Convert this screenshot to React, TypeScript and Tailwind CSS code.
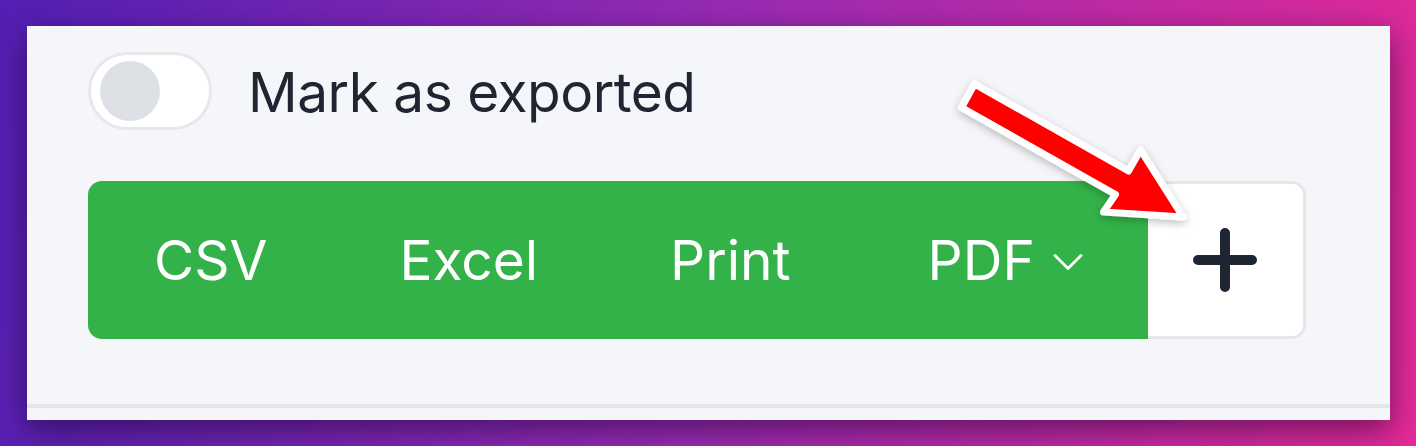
import { ChevronDown } from 'lucide-react'

const exportOptions = ['CSV', 'Excel', 'Print']

function Toggle() {
  return (
    <div className="w-[124px] h-[78px] rounded-full bg-white border-[3px] border-[#e6e8ec] flex items-center pl-[9px]">
      <div className="w-[60px] h-[60px] rounded-full bg-[#dde1e6]" />
    </div>
  )
}

function PlusIcon() {
  return (
    <svg width="64" height="64" viewBox="0 0 64 64" fill="none">
      <path d="M32 5v54M5 32h54" stroke="#1f2633" strokeWidth="10" strokeLinecap="round" />
    </svg>
  )
}

function Arrow() {
  return (
    <svg className="absolute left-0 top-0 pointer-events-none" width="1416" height="446" viewBox="0 0 1416 446">
      <defs>
        <filter id="arrowShadow" x="-20%" y="-20%" width="140%" height="140%">
          <feDropShadow dx="0" dy="3" stdDeviation="4" floodColor="#000" floodOpacity="0.25" />
        </filter>
      </defs>
      <polygon
        points="974.5,84 1128.5,171 1140.5,149.9 1183,217 1103.5,212 1115.5,194.5 961.5,107.5"
        fill="#ff0000"
        stroke="#ffffff"
        strokeWidth="7"
        strokeLinejoin="round"
        filter="url(#arrowShadow)"
      />
    </svg>
  )
}

export default function App() {
  return (
    <div className="relative w-[1416px] h-[446px] overflow-hidden bg-[linear-gradient(100deg,#531fb3_0%,#9a2bb3_50%,#e52a97_100%)] font-['Inter',sans-serif]">
      <div className="ml-[27px] mt-[26px] w-[1363px] h-[394px] bg-[#f5f6f9] shadow-[0_10px_30px_rgba(20,0,40,0.55)] flex flex-col">
        <div className="pl-[61px] pt-[26px] flex-1">
          {/* Toggle row */}
          <div className="flex items-center gap-[36px]">
            <Toggle />
            <span className="text-[55px] leading-none text-[#1f2632] tracking-[-0.5px] mt-[2px]">Mark as exported</span>
          </div>

          {/* Export buttons */}
          <div className="mt-[51px] flex h-[158px]">
            <div className="flex bg-[#33b249] rounded-l-[14px] text-white text-[55px] leading-none">
              {exportOptions.map((opt) => (
                <button key={opt} className="px-[66px] flex items-center">
                  {opt}
                </button>
              ))}
              <button className="pl-[71px] pr-[67px] flex items-center gap-[20px]">
                PDF
                <ChevronDown size={52} strokeWidth={1.3} className="-mx-[13px] mt-[4px]" />
              </button>
            </div>
            <button className="w-[158px] bg-white border-[3px] border-l-0 border-[#e4e6ea] rounded-r-[14px] flex items-center justify-center">
              <PlusIcon />
            </button>
          </div>
        </div>
        <div className="h-[4px] bg-[#e4e6ea] mb-[12px]" />
      </div>
      <Arrow />
    </div>
  )
}
